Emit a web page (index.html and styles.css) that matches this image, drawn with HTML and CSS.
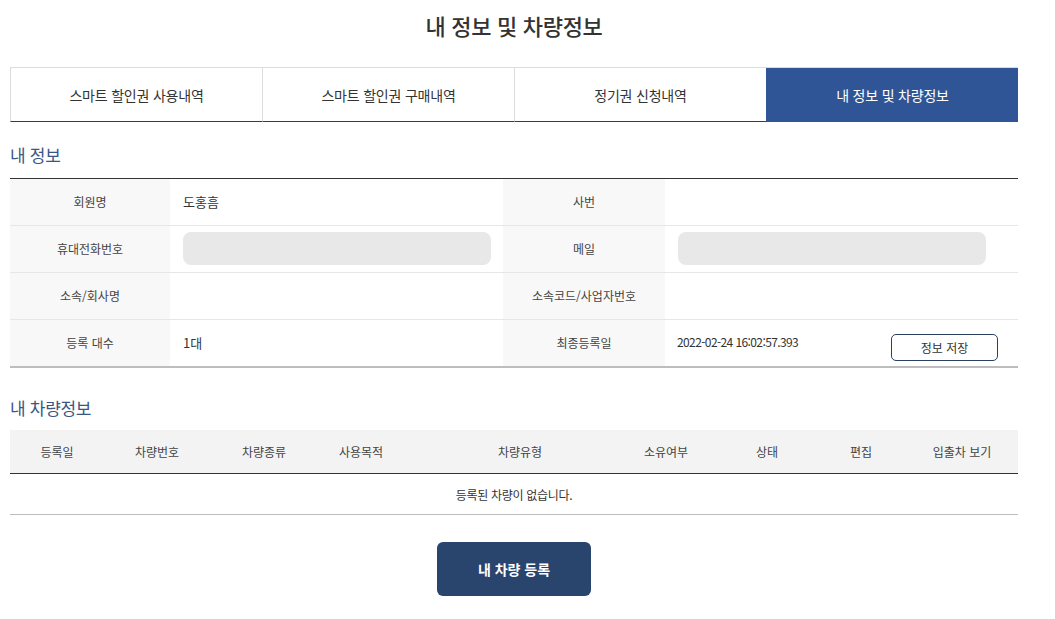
FILE: index.html
```html
<!DOCTYPE html>
<html lang="ko">
<head>
<meta charset="utf-8">
<title>내 정보 및 차량정보</title>
<link rel="stylesheet" href="styles.css">
</head>
<body>
<div class="page">
  <h1 class="title">내 정보 및 차량정보</h1>

  <nav class="tabs">
    <div class="tab">스마트 할인권 사용내역</div>
    <div class="tab">스마트 할인권 구매내역</div>
    <div class="tab">정기권 신청내역</div>
    <div class="tab active">내 정보 및 차량정보</div>
  </nav>

  <h2 class="section-title first">내 정보</h2>
  <div class="info">
    <div class="row">
      <div class="label">회원명</div>
      <div class="value">도홍흠</div>
      <div class="label">사번</div>
      <div class="value"></div>
    </div>
    <div class="row">
      <div class="label">휴대전화번호</div>
      <div class="value"><div class="field"></div></div>
      <div class="label">메일</div>
      <div class="value"><div class="field"></div></div>
    </div>
    <div class="row">
      <div class="label">소속/회사명</div>
      <div class="value"></div>
      <div class="label">소속코드/사업자번호</div>
      <div class="value"></div>
    </div>
    <div class="row last">
      <div class="label">등록 대수</div>
      <div class="value">1대</div>
      <div class="label">최종등록일</div>
      <div class="value split">
        <span class="date">2022-02-24 16:02:57.393</span>
        <button class="save-btn">정보 저장</button>
      </div>
    </div>
  </div>

  <h2 class="section-title second">내 차량정보</h2>
  <div class="cars">
    <div class="cars-head">
      <div>등록일</div>
      <div>차량번호</div>
      <div>차량종류</div>
      <div>사용목적</div>
      <div>차량유형</div>
      <div>소유여부</div>
      <div>상태</div>
      <div>편집</div>
      <div class="col-view">입출차 보기</div>
    </div>
    <div class="cars-empty">등록된 차량이 없습니다.</div>
  </div>

  <div class="actions">
    <button class="register-btn">내 차량 등록</button>
  </div>
</div>
</body>
</html>
```

FILE: styles.css
```css
* { box-sizing: border-box; }

html, body {
  margin: 0;
  padding: 0;
  background: #fff;
}

body {
  font-family: "Noto Sans CJK KR", "Noto Sans", sans-serif;
  color: #333;
  font-size: 13px;
}

.page {
  width: 1008px;
  margin-left: 10px;
}

.title {
  margin: 0;
  padding-top: 10px;
  height: 67px;
  font-size: 22px;
  line-height: 30px;
  font-weight: 500;
  text-align: center;
  color: #333;
  letter-spacing: -0.3px;
}

.tabs {
  display: grid;
  grid-template-columns: repeat(4, 1fr);
  border-top: 1px solid #dcdcdc;
  height: 55px;
}

.tab {
  display: flex;
  align-items: center;
  justify-content: center;
  font-size: 14px;
  color: #333;
  border-left: 1px solid #dcdcdc;
  border-bottom: 1px solid #2c3e5c;
  letter-spacing: -0.2px;
}

.tab.active {
  background: #2f5597;
  color: #fff;
  border-left-color: #2f5597;
  border-bottom-color: #2f5597;
}

.section-title {
  margin: 0;
  font-size: 17px;
  font-weight: 400;
  color: #3b5684;
  line-height: 24px;
  letter-spacing: -0.3px;
}

.section-title.first {
  padding-top: 21px;
  height: 56px;
}

.section-title.second {
  padding-top: 28px;
  height: 62px;
}

.info {
  border-top: 1px solid #333;
}

.row {
  display: grid;
  grid-template-columns: 160px 333px 162px 1fr;
  height: 47px;
  border-bottom: 1px solid #e6e6e6;
}

.row.last {
  height: 48px;
  border-bottom: 2px solid #bdbdbd;
}

.label {
  background: #f8f8f8;
  display: flex;
  align-items: center;
  justify-content: center;
  font-size: 12px;
  color: #444;
  padding-bottom: 2px;
}

.value {
  display: flex;
  align-items: center;
  padding-left: 13px;
  padding-bottom: 2px;
  font-size: 13px;
  color: #333;
}

.value.split {
  justify-content: space-between;
  padding-right: 20px;
  padding-left: 12px;
  padding-bottom: 0;
}

.date {
  font-size: 12px;
  letter-spacing: -0.6px;
  padding-bottom: 4px;
}

.field {
  width: 308px;
  height: 33px;
  background: #e8e8e8;
  border-radius: 8px;
}

.save-btn {
  width: 107px;
  height: 27px;
  margin-top: 8px;
  border: 1px solid #2b3f60;
  border-radius: 5px;
  background: #fff;
  font-family: inherit;
  font-size: 12px;
  color: #333;
  cursor: pointer;
}

.cars-head {
  display: grid;
  grid-template-columns: 94px 106px 108px 86px 232px 60px 142px 46px 134px;
  height: 44px;
  background: #f3f3f3;
  border-bottom: 1px solid #333;
  align-items: center;
  text-align: center;
  font-size: 12px;
  color: #444;
}

.col-view {
  padding-left: 22px;
}

.cars-empty {
  height: 41px;
  display: flex;
  align-items: center;
  justify-content: center;
  font-size: 12px;
  color: #333;
  border-bottom: 1px solid #bdbdbd;
  letter-spacing: -0.3px;
}

.actions {
  display: flex;
  justify-content: center;
  padding-top: 27px;
}

.register-btn {
  width: 154px;
  height: 54px;
  border: none;
  border-radius: 6px;
  background: #29446d;
  color: #fff;
  font-family: inherit;
  font-size: 14px;
  font-weight: 700;
  cursor: pointer;
}
```
